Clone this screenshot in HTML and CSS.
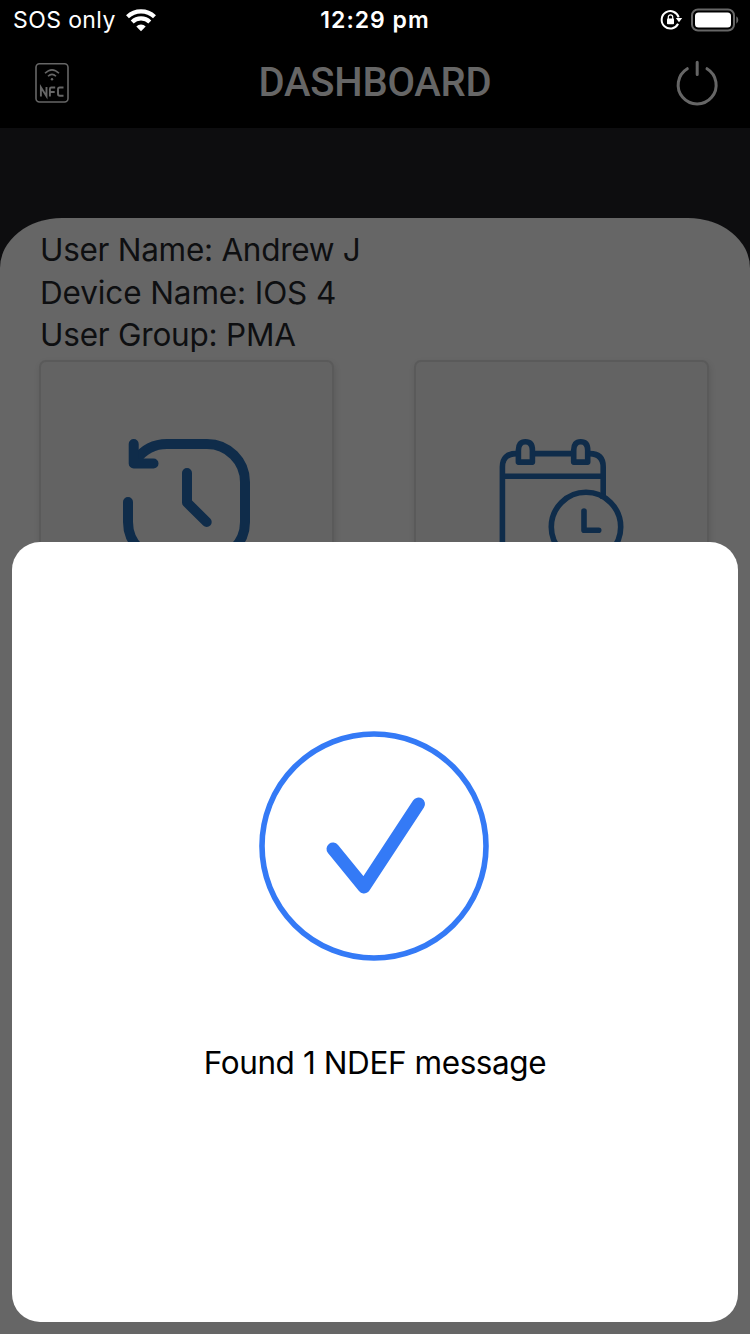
FILE: index.html
```html
<!DOCTYPE html>
<html lang="en">
<head>
<meta charset="utf-8">
<title>Dashboard</title>
<link rel="stylesheet" href="styles.css">
</head>
<body>
<div class="screen">
  <div class="status">
    <div class="status-left">
      <span class="carrier">SOS only</span>
      <svg class="wifi" width="32" height="24" viewBox="0 0 32 24"><g fill="none" stroke="#fff" stroke-width="4.2"><path d="M2.500 8.700A19.600 19.600 0 0 1 29.500 8.700"/><path d="M7.200 13.900A12.600 12.600 0 0 1 24.800 13.900"/></g><path d="M16 23.200L11.300 18.500A6.600 6.600 0 0 1 20.700 18.500Z" fill="#fff"/></svg>
    </div>
    <span class="time">12:29 pm</span>
    <div class="status-right">
      <svg width="24" height="22" viewBox="0 0 24 22"><path d="M18.100 14.800A8.700 8.700 0 1 1 18.700 8.400" fill="none" stroke="#fff" stroke-width="2"/><path d="M15.800 9H22.200L19 13.300Z" fill="#fff"/><rect x="7" y="9.400" width="7" height="5.800" rx=".8" fill="#fff"/><path d="M8.300 10V8.100a2.200 2.200 0 0 1 4.400 0V10" fill="none" stroke="#fff" stroke-width="1.200"/></svg>
      <svg width="50" height="24" viewBox="0 0 50 24"><rect x="2" y="1.500" width="42" height="21" rx="6" fill="none" stroke="#666" stroke-width="2"/><rect x="5" y="4.500" width="36" height="15" rx="3.500" fill="#fff"/><path d="M46.300 8.300Q48.300 9.500 48.300 12T46.300 15.700Z" fill="#666"/></svg>
    </div>
  </div>
  <header class="header">
    <svg width="36" height="42" viewBox="0 0 36 42" fill="none" stroke="#666" stroke-width="1.600"><rect x="2" y="1.800" width="32" height="38.200" rx="3.500"/><path d="M11 11.300Q18 4.300 25 11.300M14 14.300Q18 10.400 22 14.300"/><circle cx="18" cy="17.300" r="1.200" fill="#666" stroke="none"/><path stroke-width="1.900" d="M6.900 34.500V25.200L12.500 34.200V25M15.900 34.500V27Q15.900 25.500 17.400 25.500H21.200M15.900 30H20.700M29.500 25.500H25.800Q24 25.500 24 27.300V32Q24 33.700 25.800 33.700H29.500"/></svg>
    <h1 class="title">DASHBOARD</h1>
    <svg width="44" height="46" viewBox="0 0 44 46" fill="none" stroke="#666" stroke-width="3" stroke-linecap="round"><path d="M12.300 8.700A19 19 0 1 0 32 8.700M22.200 2.200V14.400"/></svg>
  </header>
  <main class="panel">
    <p class="info name">User Name: Andrew J</p>
    <p class="info device">Device Name: IOS 4</p>
    <p class="info group">User Group: PMA</p>
    <div class="cards">
      <div class="card">
        <svg width="128" height="128" viewBox="0 0 128 128" fill="none" stroke="#0f2c4a" stroke-width="10" stroke-linecap="round" stroke-linejoin="round"><path d="M13 21C21 10 32 5 44 5H84A38 38 0 0 1 122 43V83A38 38 0 0 1 84 121H43A38 38 0 0 1 5 83V63"/><path d="M10.700 5V24.500H30.500M64 34V63.500L83.700 83"/></svg>
      </div>
      <div class="card">
        <svg width="126" height="128" viewBox="-0.7 0 126 128" fill="none" stroke="#0f2c4a" stroke-width="5.600"><path d="M16.500 14.600Q2.700 14.600 2.700 28V104Q4 117 17 117H56M34.500 14.600H72M90 14.600Q103.500 14.600 103.500 28V60M4 37.300H103.500"/><path d="M18.700 23.100V11.200Q18.700 2.800 25.700 2.800T32.700 11.200V23.100ZM74 23.100V11.200Q74 2.800 81 2.800T88 11.200V23.100Z" stroke-linejoin="round"/><circle cx="86.300" cy="88" r="34.700"/><path d="M84.300 72V91.300H99" stroke-linecap="round" stroke-linejoin="round"/></svg>
      </div>
    </div>
  </main>
  <section class="sheet">
    <svg class="success" width="230" height="230" viewBox="0 0 230 230" fill="none" stroke="#347af6"><circle cx="115" cy="115" r="112" stroke-width="5.600"/><path d="M74 118L105 156L159.500 73" stroke-width="13" stroke-linecap="round" stroke-linejoin="round"/></svg>
    <p class="message">Found 1 NDEF message</p>
  </section>
</div>
</body>
</html>
```
FILE: styles.css
```css
body { margin: 0; background: #666; }
.screen {
  position: relative;
  width: 750px;
  height: 1334px;
  overflow: hidden;
  background: #0d0d0f;
  font-family: Inter, "Liberation Sans", sans-serif;
}
.status {
  display: grid;
  grid-template-columns: 1fr auto 1fr;
  align-items: center;
  box-sizing: border-box;
  height: 40px;
  padding: 0 10px 2px 13px;
  background: #000;
  color: #fff;
  font-size: 23px;
  line-height: 38px;
}
.status-left { display: flex; align-items: center; gap: 9px; }
.carrier { letter-spacing: .4px; padding-top: 1px; }
.wifi { display: block; }
.time { font-weight: 600; padding: 1px 3px 0 0; letter-spacing: 1px; }
.status-right { display: flex; justify-content: flex-end; align-items: center; gap: 6px; }
.header {
  display: flex;
  align-items: center;
  justify-content: space-between;
  height: 88px;
  box-sizing: border-box;
  padding: 0 31px 3px 34px;
  background: #000;
}
.title {
  margin: 0 0 0 5px;
  color: #666;
  font: 500 40px/48px Roboto, sans-serif;
  letter-spacing: -.25px;
}
.panel {
  box-sizing: border-box;
  height: 1116px;
  margin-top: 90px;
  padding: 11px 41px 0 39px;
  border-radius: 62px 62px 0 0 / 50px 50px 0 0;
  background: #666;
}
.info {
  margin: 0 0 0 1px;
  color: #0e0f11;
  font-size: 31.5px;
  line-height: 42.5px;
  white-space: nowrap;
}
.name { letter-spacing: -.28px; }
.device { letter-spacing: -.12px; }
.group { letter-spacing: -.22px; }
.cards { display: flex; justify-content: space-between; margin-top: 3px; }
.card {
  display: flex;
  justify-content: center;
  box-sizing: border-box;
  width: 295px;
  height: 295px;
  padding-top: 77px;
  border: 2px solid #5a5a5a;
  border-radius: 7px;
  background: #636363;
  box-shadow: 1px 3px 6px rgba(0, 0, 0, .12);
}
.sheet {
  position: absolute;
  top: 542px;
  left: 12px;
  display: flex;
  flex-direction: column;
  align-items: center;
  box-sizing: border-box;
  width: 726px;
  height: 780px;
  padding-top: 189px;
  border-radius: 28px;
  background: #fff;
}
.success { margin-right: 2px; }
.message {
  margin: 82px 0 0;
  color: #000;
  font-size: 31.5px;
  line-height: 40px;
  letter-spacing: -.42px;
  white-space: nowrap;
}
```
